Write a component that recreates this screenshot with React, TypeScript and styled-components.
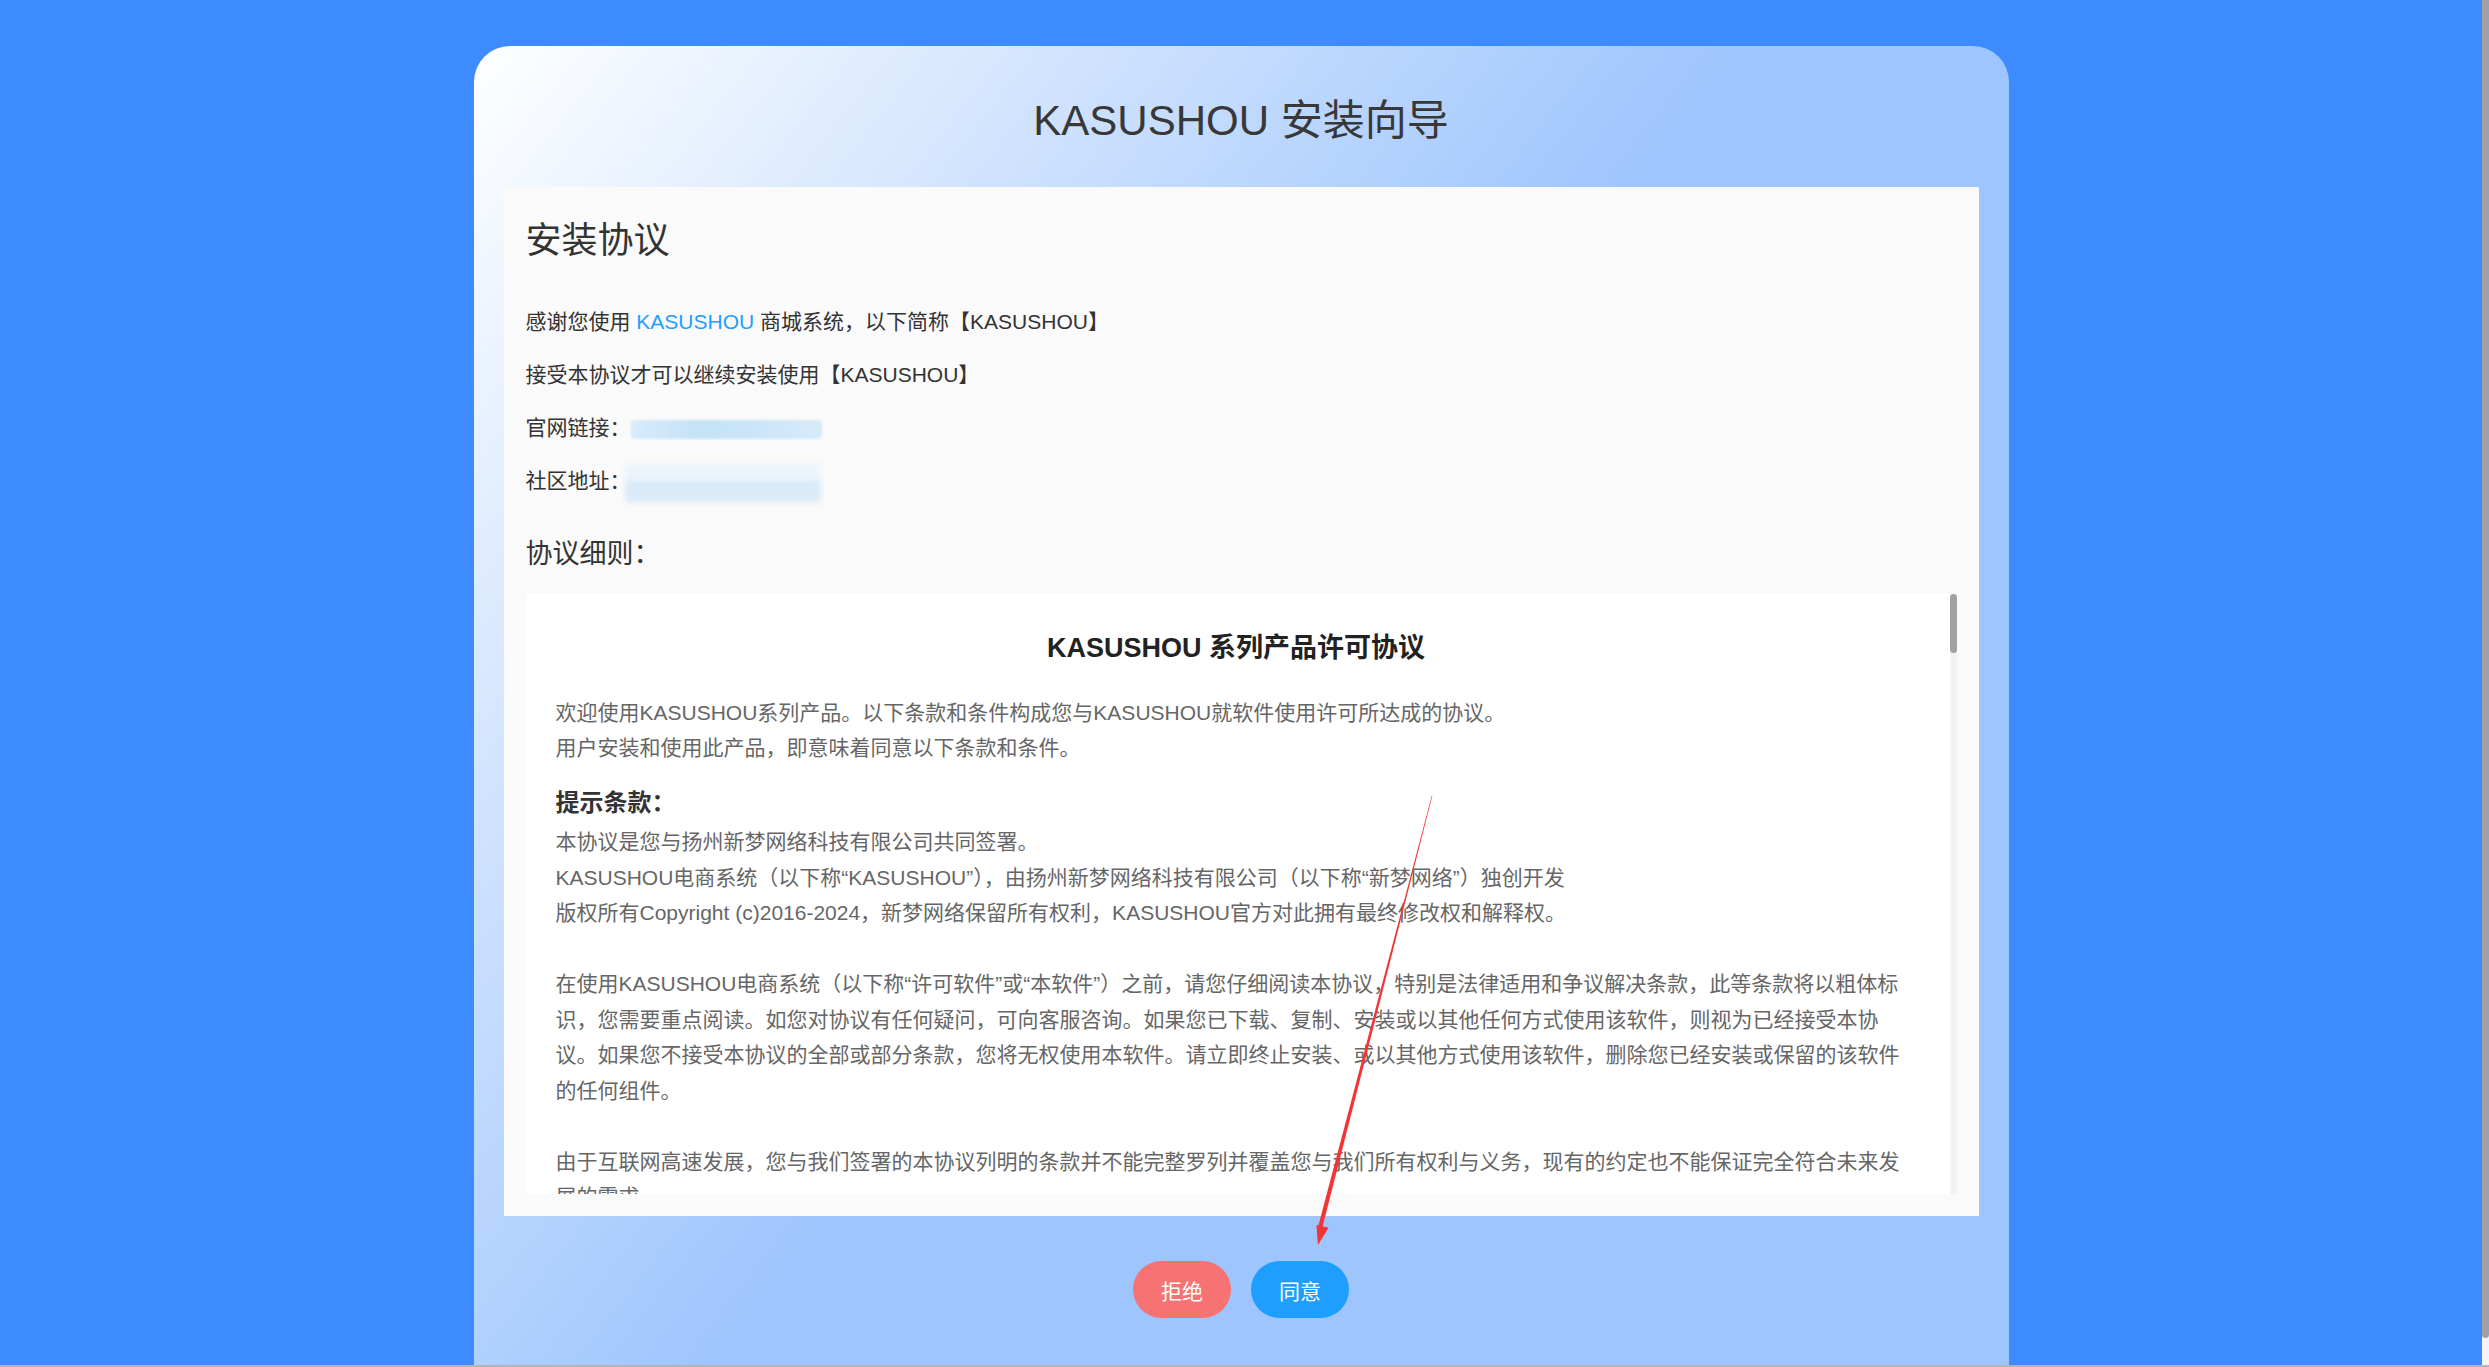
import React from "react";
import styled, { createGlobalStyle } from "styled-components";

const GlobalStyle = createGlobalStyle`
  html, body {
    margin: 0;
    padding: 0;
    height: 100%;
    overflow: hidden;
  }
  body {
    font-family: "Liberation Sans", "Noto Sans CJK SC", sans-serif;
  }
  #root {
    height: 100%;
  }
`;

const Screen = styled.div`
  display: grid;
  grid-template-columns: minmax(0, 1fr) 7px;
  grid-template-rows: minmax(0, 1fr) 2px;
  height: 100vh;
`;

const Viewport = styled.main`
  position: relative;
  overflow: hidden;
  box-sizing: border-box;
  padding-top: 46px;
  background: #3d8bfe;
`;

const ScrollRail = styled.div<{ $track: string }>`
  display: flex;
  flex-direction: column;
  flex: none;
  width: 7px;
  background: ${(p) => p.$track};
`;

const ScrollThumb = styled.div<{ $length: number; $radius: string }>`
  height: ${(p) => p.$length}px;
  flex: none;
  background: #a1a1a3;
  border-radius: ${(p) => p.$radius};
`;

const BottomEdge = styled.div`
  grid-column: 1 / -1;
  background: #b4b4b4;
`;

const Card = styled.section`
  box-sizing: border-box;
  width: 1535px;
  margin: 0 auto;
  padding: 0 30px 80px;
  border-radius: 36px 36px 0 0;
  background: linear-gradient(128deg, #ffffff 0px, #9ec5fd 1000px);
`;

const Title = styled.h1`
  margin: 0;
  padding: 47px 0 38px;
  font-size: 42px;
  line-height: 56px;
  font-weight: 400;
  color: #383838;
  text-align: center;
`;

const Panel = styled.div`
  background: #fafafa;
  padding: 30px 22px 21.7px;
`;

const PanelHeading = styled.h2`
  margin: 0 0 31.4px;
  font-size: 36px;
  line-height: 48px;
  font-weight: 400;
  color: #333;
`;

const InfoLine = styled.p`
  margin: 0;
  font-size: 21px;
  line-height: 52.9px;
  color: #333;
  white-space: nowrap;
`;

const Brand = styled.span`
  color: #1e9fff;
`;

const Masked = styled.span<{ $w: number; $h: number; $shift: number; $fill: string; $blur: number }>`
  display: inline-block;
  vertical-align: middle;
  width: ${(p) => p.$w}px;
  height: ${(p) => p.$h}px;
  margin-left: ${(p) => p.$shift}px;
  background: ${(p) => p.$fill};
  filter: blur(${(p) => p.$blur}px);
  border-radius: 4px;
`;

const SectionHeading = styled.h3`
  margin: 27.8px 0 22.4px;
  font-size: 27px;
  line-height: 36px;
  font-weight: 400;
  color: #333;
`;

const AgreementBox = styled.div`
  display: flex;
  height: 600px;
  background: #fff;
`;

const AgreementBody = styled.div`
  flex: 1;
  min-width: 0;
  overflow: hidden;
  padding: 30px 33px 0 30px;
`;

const BoxTitle = styled.h4`
  margin: 0 0 22.75px;
  font-size: 27px;
  line-height: 48px;
  font-weight: 700;
  color: #222;
  text-align: center;
`;

const ClauseHeading = styled.h5`
  margin: 17px 0 1.2px;
  font-size: 24px;
  line-height: 40px;
  font-weight: 700;
  color: #333;
`;

const Para = styled.p<{ $spaced?: boolean }>`
  margin: ${(p) => (p.$spaced ? "35.5px" : "0")} 0 0;
  font-size: 21px;
  line-height: 35.5px;
  color: #666;
`;

const Actions = styled.div`
  display: flex;
  justify-content: center;
  gap: 20px;
  margin-top: 45.3px;
`;

const ActionButton = styled.button<{ $tone: string }>`
  width: 98px;
  height: 57px;
  border: none;
  border-radius: 28.5px;
  padding: 0;
  background: ${(p) => p.$tone};
  color: #fff;
  font-family: "Liberation Sans", "Noto Sans CJK SC", sans-serif;
  font-size: 21px;
  cursor: pointer;
`;

const Annotation = styled.svg`
  position: absolute;
  left: 0;
  top: 0;
  pointer-events: none;
`;

export default function App() {
  return (
    <>
      <GlobalStyle />
      <Screen>
        <Viewport>
          <Card>
            <Title>KASUSHOU 安装向导</Title>
            <Panel>
              <PanelHeading>安装协议</PanelHeading>
              <InfoLine>
                感谢您使用 <Brand>KASUSHOU</Brand> 商城系统，以下简称【KASUSHOU】
              </InfoLine>
              <InfoLine>接受本协议才可以继续安装使用【KASUSHOU】</InfoLine>
              <InfoLine>
                官网链接：
                <Masked
                  $w={191}
                  $h={19}
                  $shift={0}
                  $blur={1.2}
                  $fill="linear-gradient(90deg, #d8ecfb 0%, #c4e2f8 35%, #c9e5f9 60%, #d7ebfa 100%)"
                />
              </InfoLine>
              <InfoLine>
                社区地址：
                <Masked
                  $w={196}
                  $h={40}
                  $shift={-6}
                  $blur={2.5}
                  $fill="linear-gradient(180deg, #eef5fc 0%, #eaf3fb 42%, #d9eaf9 50%, #dcecf9 100%)"
                />
              </InfoLine>
              <SectionHeading>协议细则：</SectionHeading>
              <AgreementBox>
                <AgreementBody>
                  <BoxTitle>KASUSHOU 系列产品许可协议</BoxTitle>
                  <Para>
                    欢迎使用KASUSHOU系列产品。以下条款和条件构成您与KASUSHOU就软件使用许可所达成的协议。
                    <br />
                    用户安装和使用此产品，即意味着同意以下条款和条件。
                  </Para>
                  <ClauseHeading>提示条款：</ClauseHeading>
                  <Para>
                    本协议是您与扬州新梦网络科技有限公司共同签署。
                    <br />
                    KASUSHOU电商系统（以下称“KASUSHOU”），由扬州新梦网络科技有限公司（以下称“新梦网络”）独创开发
                    <br />
                    版权所有Copyright (c)2016-2024，新梦网络保留所有权利，KASUSHOU官方对此拥有最终修改权和解释权。
                  </Para>
                  <Para $spaced>
                    在使用KASUSHOU电商系统（以下称“许可软件”或“本软件”）之前，请您仔细阅读本协议，特别是法律适用和争议解决条款，此等条款将以粗体标识，您需要重点阅读。如您对协议有任何疑问，可向客服咨询。如果您已下载、复制、安装或以其他任何方式使用该软件，则视为已经接受本协议。如果您不接受本协议的全部或部分条款，您将无权使用本软件。请立即终止安装、或以其他方式使用该软件，删除您已经安装或保留的该软件的任何组件。
                  </Para>
                  <Para $spaced>
                    由于互联网高速发展，您与我们签署的本协议列明的条款并不能完整罗列并覆盖您与我们所有权利与义务，现有的约定也不能保证完全符合未来发展的需求。
                  </Para>
                  <Para>
                    因此，新梦网络发布的相关声明及政策、规则和协议，均为本协议的补充协议，与本协议不可分割且具有同等法律效力。
                  </Para>
                </AgreementBody>
                <ScrollRail $track="#f3f3f3">
                  <ScrollThumb $length={59} $radius="4px" />
                </ScrollRail>
              </AgreementBox>
            </Panel>
            <Actions>
              <ActionButton $tone="#f77272">拒绝</ActionButton>
              <ActionButton $tone="#1e9fff">同意</ActionButton>
            </Actions>
          </Card>
          <Annotation width={2482} height={1365} viewBox="0 0 2482 1365">
            <polygon
              points="1432.3,796.1 1322.1,1228.5 1317.9,1227.5 1431.7,795.9"
              fill="#f33434"
            />
            <polygon points="1318,1245 1328.5,1227.8 1316.4,1224.9" fill="#f33434" />
          </Annotation>
        </Viewport>
        <ScrollRail $track="#f5f5f5">
          <ScrollThumb $length={1338} $radius="0 0 4px 4px" />
        </ScrollRail>
        <BottomEdge />
      </Screen>
    </>
  );
}
